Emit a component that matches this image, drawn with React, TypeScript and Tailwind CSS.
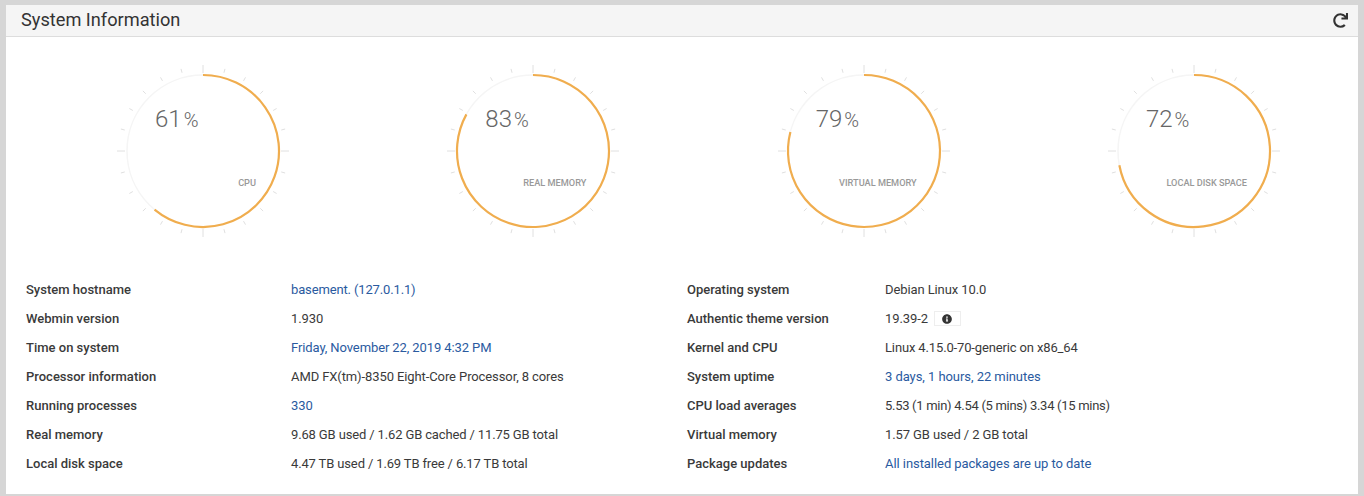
import React from 'react';
import { FaRedo, FaInfoCircle } from 'react-icons/fa';

const CX = 90;
const CY = 90;
const R = 76;

const gauges = [
  { pct: 61, label: 'CPU' },
  { pct: 83, label: 'REAL MEMORY' },
  { pct: 79, label: 'VIRTUAL MEMORY' },
  { pct: 72, label: 'LOCAL DISK SPACE' },
];

type Row = { label: string; value: React.ReactNode; link?: boolean; tracking?: string };

const leftRows: Row[] = [
  { label: 'System hostname', value: 'basement. (127.0.1.1)', link: true, tracking: 'tracking-[-0.14px]' },
  { label: 'Webmin version', value: '1.930' },
  { label: 'Time on system', value: 'Friday, November 22, 2019 4:32 PM', link: true },
  { label: 'Processor information', value: 'AMD FX(tm)-8350 Eight-Core Processor, 8 cores' },
  { label: 'Running processes', value: '330', link: true },
  { label: 'Real memory', value: '9.68 GB used / 1.62 GB cached / 11.75 GB total', tracking: 'tracking-[-0.14px]' },
  { label: 'Local disk space', value: '4.47 TB used / 1.69 TB free / 6.17 TB total', tracking: 'tracking-[-0.14px]' },
];

const rightRows: Row[] = [
  { label: 'Operating system', value: 'Debian Linux 10.0' },
  {
    label: 'Authentic theme version',
    value: (
      <span className="flex items-center">
        19.39-2
        <span className="ml-[6px] flex h-[15px] w-[27px] items-center justify-center border border-[#eeeeee] text-[10px] text-[#333333]">
          <FaInfoCircle />
        </span>
      </span>
    ),
  },
  { label: 'Kernel and CPU', value: 'Linux 4.15.0-70-generic on x86_64', tracking: 'tracking-[-0.14px]' },
  { label: 'System uptime', value: '3 days, 1 hours, 22 minutes', link: true, tracking: 'tracking-[-0.06px]' },
  { label: 'CPU load averages', value: '5.53 (1 min) 4.54 (5 mins) 3.34 (15 mins)', tracking: 'tracking-[-0.29px]' },
  { label: 'Virtual memory', value: '1.57 GB used / 2 GB total' },
  { label: 'Package updates', value: 'All installed packages are up to date', link: true, tracking: 'tracking-[-0.06px]' },
];

const polar = (r: number, deg: number) => {
  const a = (deg * Math.PI) / 180;
  return { x: CX + r * Math.sin(a), y: CY - r * Math.cos(a) };
};

const Gauge = ({ pct, label }: { pct: number; label: string }) => {
  const end = polar(R, (pct / 100) * 360);
  const large = pct > 50 ? 1 : 0;
  const ticks = Array.from({ length: 24 }, (_, i) => i * 15);

  return (
    <div className="relative h-[180px] w-[180px] shrink-0">
      <svg width="180" height="180" viewBox="0 0 180 180">
        {ticks.map((deg) => {
          const major = deg % 90 === 0;
          const a = polar(major ? 78 : 81, deg);
          const b = polar(major ? 86 : 85, deg);
          return (
            <line key={deg} x1={a.x} y1={a.y} x2={b.x} y2={b.y} stroke="#e0e0e0" strokeWidth="1" />
          );
        })}
        <circle cx={CX} cy={CY} r={R} fill="none" stroke="#f5f5f5" strokeWidth="1.5" />
        <path
          d={`M ${CX} ${CY - R} A ${R} ${R} 0 ${large} 1 ${end.x} ${end.y}`}
          fill="none"
          stroke="#f0ad4e"
          strokeWidth="2.2"
        />
      </svg>
      <div className="absolute left-[42px] top-[42px] flex items-baseline font-light text-[#666666]">
        <span className="text-[24px] leading-[32px]">{pct}</span>
        <span className="ml-[2px] text-[20px] leading-[32px]">%</span>
      </div>
      <div className="absolute right-[37px] top-[116px] text-[9.2px] font-medium leading-[12px] text-[#999999]">
        {label}
      </div>
    </div>
  );
};

const InfoColumn = ({ rows, labelWidth, width }: { rows: Row[]; labelWidth: string; width: string }) => (
  <div className={width}>
    {rows.map((row) => (
      <div key={row.label} className="flex h-[29px] items-center">
        <div className={`${labelWidth} font-medium text-[#3a3a3a]`}>{row.label}</div>
        <div className={`${row.tracking ?? 'tracking-[-0.1px]'} ${row.link ? 'text-[#2a5a9f]' : 'text-[#3a3a3a]'}`}>
          {row.value}
        </div>
      </div>
    ))}
  </div>
);

export default function App() {
  return (
    <div className="h-[496px] bg-[#d6d6d6] px-[6px] pb-[2px] pt-[5px] font-['Roboto',sans-serif] text-[13px]">
      <div className="h-[489px] bg-white">
        <div className="flex h-[32px] items-center justify-between border-b border-[#dddddd] bg-[#f5f5f5] pl-[15px] pr-[10px]">
          <h3 className="mb-[1px] text-[18.2px] text-[#333333]">System Information</h3>
          <FaRedo className="mb-[1px] text-[15px] text-[#333333]" />
        </div>
        <div className="flex gap-[150.33px] pl-[107px] pt-[24px]">
          {gauges.map((g) => (
            <Gauge key={g.label} pct={g.pct} label={g.label} />
          ))}
        </div>
        <div className="flex pl-[20px] pt-[34px]">
          <InfoColumn rows={leftRows} labelWidth="w-[265px]" width="w-[661px]" />
          <InfoColumn rows={rightRows} labelWidth="w-[198px]" width="w-[660px]" />
        </div>
      </div>
    </div>
  );
}
